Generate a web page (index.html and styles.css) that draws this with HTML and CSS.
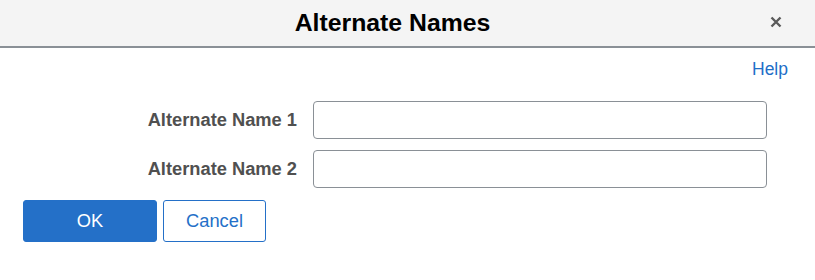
FILE: index.html
```html
<!DOCTYPE html>
<html>
<head>
  <title>Alternate Names</title>
  <link rel="stylesheet" href="styles.css">
</head>
<body>

  <div class="dialog">
    <div class="header">
      <h1 class="title">Alternate Names</h1>
      <button class="close" aria-label="Close">
        <svg width="12" height="12" viewBox="0 0 12 12">
          <path d="M1.5 1.5 L10.5 10.5 M10.5 1.5 L1.5 10.5" stroke="#5a5a5a" stroke-width="2.4"/>
        </svg>
      </button>
    </div>

    <div class="content">
      <div class="help-row">
        <a href="#" class="help">Help</a>
      </div>

      <div class="form">
        <label class="label" for="alt1">Alternate Name 1</label>
        <input class="field" id="alt1" type="text">
        <label class="label" for="alt2">Alternate Name 2</label>
        <input class="field" id="alt2" type="text">
      </div>

      <div class="actions">
        <button class="btn primary">OK</button>
        <button class="btn secondary">Cancel</button>
      </div>
    </div>
  </div>

</body>
</html>
```

FILE: styles.css
```css
body {
  margin: 0;
  font-family: "Liberation Sans", Arial, sans-serif;
  background: #fff;
}

.header {
  position: relative;
  box-sizing: border-box;
  height: 48px;
  padding-right: 30px;
  background-color: #f4f4f4;
  border-bottom: 2px solid #8a9096;
  display: flex;
  align-items: center;
  justify-content: center;
}

.title {
  margin: 0;
  font-size: 24.8px;
  font-weight: bold;
  color: #000;
}

.close {
  position: absolute;
  right: 32px;
  top: 15px;
  width: 14px;
  height: 14px;
  padding: 0;
  border: none;
  background: none;
  display: flex;
  align-items: center;
  justify-content: center;
  cursor: pointer;
}

.content {
  padding: 0 27px 0 23px;
}

.help-row {
  display: flex;
  justify-content: flex-end;
  padding-top: 11px;
  height: 29px;
}

.help {
  font-size: 17.5px;
  color: #1f6fc8;
  text-decoration: none;
  line-height: 20px;
}

.form {
  display: grid;
  grid-template-columns: 274px 454px;
  column-gap: 16px;
  row-gap: 11px;
  align-items: center;
  margin-top: 13px;
}

.label {
  text-align: right;
  font-size: 18.3px;
  font-weight: bold;
  color: #505050;
}

.field {
  box-sizing: border-box;
  height: 38px;
  width: 454px;
  border: 1px solid #8a9096;
  border-radius: 4px;
  font-size: 16px;
  padding: 0 8px;
  font-family: inherit;
}

.actions {
  display: flex;
  gap: 6px;
  margin-top: 12px;
}

.btn {
  box-sizing: border-box;
  height: 42px;
  border-radius: 3px;
  font-size: 18.3px;
  font-family: inherit;
  cursor: pointer;
}

.primary {
  width: 134px;
  background-color: #2470c8;
  border: 1px solid #2470c8;
  color: #fff;
}

.secondary {
  width: 103px;
  background-color: #fff;
  border: 1px solid #2470c8;
  color: #2470c8;
}
```
